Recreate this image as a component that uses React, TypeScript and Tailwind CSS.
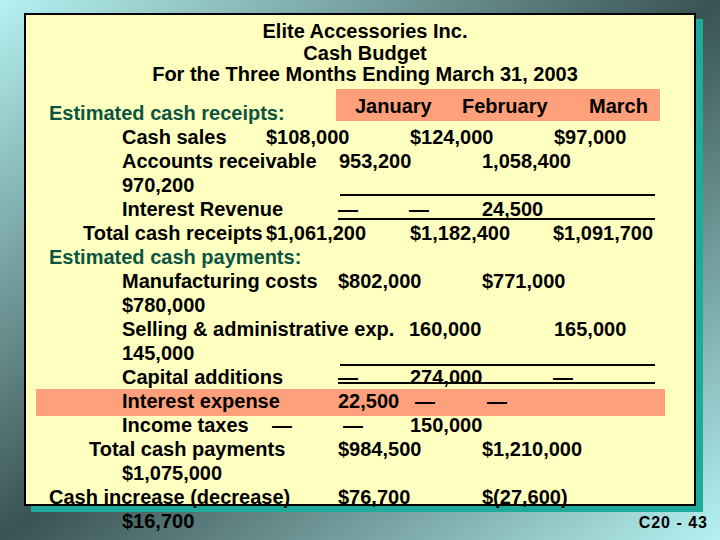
export default function App() {
  return (
    <div className="w-[720px] h-[540px] overflow-hidden bg-[linear-gradient(to_bottom_right,#b6f2f2_0%,#3a5252_50%,#b6f2f2_100%)] pt-[13px] font-['Liberation_Sans',Arial,sans-serif] font-bold text-black">
      {/* Slide card */}
      <div className="ml-[24px] w-[672px] h-[493px] border-2 border-black bg-[#ffffc0] shadow-[7px_6px_0_0_#1eab9c] text-[20px]">
        {/* Title */}
        <div className="pt-[6px] pl-[10px] text-center leading-[21.5px]">
          <div>Elite Accessories Inc.</div>
          <div>Cash Budget</div>
          <div>For the Three Months Ending March 31, 2003</div>
        </div>

        {/* Month header + first heading */}
        <div className="flex items-start mt-[3.5px] leading-6 whitespace-nowrap">
          <span className="w-[310px] shrink-0 pl-[23px] mt-[12px] text-[#0b5444]">Estimated cash receipts:</span>
          <div className="flex w-[324px] h-[32px] shrink-0 bg-[#ffa07a] pt-[5px] pl-[19px]">
            <span className="w-[107px] shrink-0">January</span>
            <span className="w-[127px] shrink-0">February</span>
            <span>March</span>
          </div>
        </div>

        <div className="leading-6 whitespace-nowrap">
          <div className="flex h-6 pl-[96px]">
            <span className="w-[144px] shrink-0">Cash sales</span>
            <span className="w-[144px] shrink-0">$108,000</span>
            <span className="w-[144px] shrink-0">$124,000</span>
            <span>$97,000</span>
          </div>
          <div className="flex h-6 pl-[96px]">
            <span className="w-[217px] shrink-0">Accounts receivable</span>
            <span className="w-[143px] shrink-0">953,200</span>
            <span>1,058,400</span>
          </div>
          <div className="flex items-start h-6 pl-[96px]">
            <span className="w-[218px] shrink-0">970,200</span>
            <span className="w-[315px] h-[23px] shrink-0 border-b-2 border-black" />
          </div>
          <div className="flex items-start h-6 pl-[96px]">
            <span className="w-[216px] shrink-0">Interest Revenue</span>
            <div className="flex w-[317px] h-[23px] shrink-0 border-b-2 border-black">
              <span className="w-[71px] shrink-0">—</span>
              <span className="w-[73px] shrink-0">—</span>
              <span>24,500</span>
            </div>
          </div>
          <div className="flex h-6 pl-[57px]">
            <span className="w-[183px] shrink-0">Total cash receipts</span>
            <span className="w-[144px] shrink-0">$1,061,200</span>
            <span className="w-[143px] shrink-0">$1,182,400</span>
            <span>$1,091,700</span>
          </div>
          <div className="flex h-6 pl-[23px] text-[#0b5444]">Estimated cash payments:</div>
          <div className="flex h-6 pl-[96px]">
            <span className="w-[216px] shrink-0">Manufacturing costs</span>
            <span className="w-[144px] shrink-0">$802,000</span>
            <span>$771,000</span>
          </div>
          <div className="flex h-6 pl-[96px]">$780,000</div>
          <div className="flex h-6 pl-[96px]">
            <span className="w-[287px] shrink-0">Selling &amp; administrative exp.</span>
            <span className="w-[145px] shrink-0">160,000</span>
            <span>165,000</span>
          </div>
          <div className="flex items-start h-6 pl-[96px]">
            <span className="w-[218px] shrink-0">145,000</span>
            <span className="w-[315px] h-[25px] shrink-0 border-b-2 border-black" />
          </div>
          <div className="flex items-start h-6 pl-[96px]">
            <span className="w-[216px] shrink-0">Capital additions</span>
            <div className="flex items-start w-[317px] h-[19px] shrink-0 border-b-2 border-black">
              <span className="w-[72px] shrink-0">—</span>
              <span className="w-[143px] shrink-0">274,000</span>
              <span>—</span>
            </div>
          </div>
          <div className="flex items-start h-6">
            <div className="flex ml-[10px] w-[629px] h-[27px] shrink-0 bg-[#ffa07a] pl-[86px]">
              <span className="w-[216px] shrink-0">Interest expense</span>
              <span className="w-[77px] shrink-0">22,500</span>
              <span className="w-[72px] shrink-0">—</span>
              <span>—</span>
            </div>
          </div>
          <div className="flex h-6 pl-[96px]">
            <span className="w-[150px] shrink-0">Income taxes</span>
            <span className="w-[71px] shrink-0">—</span>
            <span className="w-[67px] shrink-0">—</span>
            <span>150,000</span>
          </div>
          <div className="flex h-6 pl-[63px]">
            <span className="w-[249px] shrink-0">Total cash payments</span>
            <span className="w-[144px] shrink-0">$984,500</span>
            <span>$1,210,000</span>
          </div>
          <div className="flex h-6 pl-[96px]">$1,075,000</div>
          <div className="flex h-6 pl-[23px]">
            <span className="w-[289px] shrink-0">Cash increase (decrease)</span>
            <span className="w-[144px] shrink-0">$76,700</span>
            <span>$(27,600)</span>
          </div>
          <div className="flex h-6 pl-[96px]">$16,700</div>
        </div>
      </div>

      {/* Slide number */}
      <div className="mt-[7px] pr-[12px] text-right text-[16px] leading-5 tracking-[1px]">C20 - 43</div>
    </div>
  );
}
